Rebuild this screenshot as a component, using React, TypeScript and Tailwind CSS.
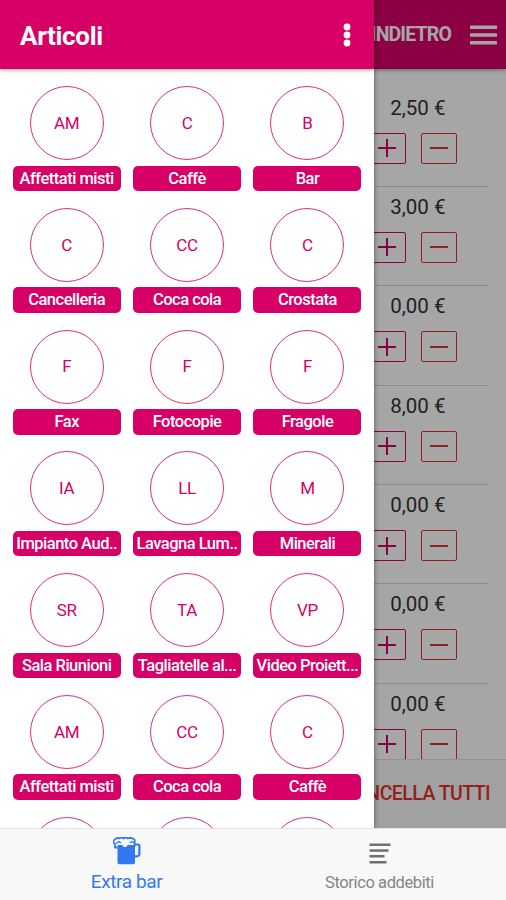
const articles = [
  { initials: 'AM', name: 'Affettati misti' },
  { initials: 'C', name: 'Caffè' },
  { initials: 'B', name: 'Bar' },
  { initials: 'C', name: 'Cancelleria' },
  { initials: 'CC', name: 'Coca cola' },
  { initials: 'C', name: 'Crostata' },
  { initials: 'F', name: 'Fax' },
  { initials: 'F', name: 'Fotocopie' },
  { initials: 'F', name: 'Fragole' },
  { initials: 'IA', name: 'Impianto Aud..' },
  { initials: 'LL', name: 'Lavagna Lum..' },
  { initials: 'M', name: 'Minerali' },
  { initials: 'SR', name: 'Sala Riunioni' },
  { initials: 'TA', name: 'Tagliatelle al...' },
  { initials: 'VP', name: 'Video Proiett...' },
  { initials: 'AM', name: 'Affettati misti' },
  { initials: 'CC', name: 'Coca cola' },
  { initials: 'C', name: 'Caffè' },
  { initials: '', name: '' },
  { initials: '', name: '' },
  { initials: '', name: '' },
]

const prices = ['2,50 €', '3,00 €', '0,00 €', '8,00 €', '0,00 €', '0,00 €', '0,00 €']

function BeerIcon() {
  return (
    <svg width="28" height="28" viewBox="0 0 28 28" fill="none">
      <path d="M4.5 10h17.5v15.4a1.8 1.8 0 0 1-1.8 1.8H6.3a1.8 1.8 0 0 1-1.8-1.8z" fill="#3478f0" />
      <path d="M21 7.5h4a1.4 1.4 0 0 1 1.4 1.4v8a2.4 2.4 0 0 1-2.4 2.4H21" stroke="#3478f0" strokeWidth="2.2" />
      <path
        d="M4.5 10.5H2V7.2A2.8 2.8 0 0 1 2.6 2a3 3 0 0 1 3.6-.6 4 4 0 0 1 4.4 0 4 4 0 0 1 4.4 0 4 4 0 0 1 4.2 0A2.6 2.6 0 0 1 21.6 5v5"
        stroke="#3478f0"
        strokeWidth="1.8"
      />
      <path d="M4.5 8v3h17V8z" fill="#3478f0" />
      <path d="M3 6.5l3-2 2 1.5M17 6l2-1.5 2.5 2" stroke="#3478f0" strokeWidth="1.3" />
      <path d="M9.5 8.5a2.6 2.2 0 0 0 5 0l-2.5-1.6z" fill="#f8f8f8" />
    </svg>
  )
}

function ListIcon() {
  return (
    <svg width="22" height="22" viewBox="0 0 22 22" fill="#707070">
      <rect x="0.5" y="0.5" width="21" height="2.5" />
      <rect x="0.5" y="6.3" width="19" height="2.5" />
      <rect x="0.5" y="12" width="15" height="2.5" />
      <rect x="0.5" y="18" width="17" height="2.5" />
    </svg>
  )
}

function Header() {
  return (
    <header className="z-10 flex h-[69px] shrink-0 items-center justify-end bg-[#d60066] pr-[9px] text-white shadow-[0_1px_4px_rgba(0,0,0,0.4)]">
      <span className="mr-[19px] pt-px text-[19.5px] font-bold tracking-[-0.85px]">INDIETRO</span>
      <svg width="27" height="20" viewBox="0 0 27 20" fill="currentColor">
        <rect width="27" height="3.6" y="0.5" rx="0.6" />
        <rect width="27" height="3.6" y="8.2" rx="0.6" />
        <rect width="27" height="3.6" y="15.9" rx="0.6" />
      </svg>
    </header>
  )
}

function PriceRow({ price }: { price: string }) {
  return (
    <div className="mx-[18px] h-[99.4px] border-b border-[#d8d8d8] pt-[8px]">
      <div className="flex justify-end pr-[42.5px] text-[20.5px] leading-[24px] text-[#333]">{price}</div>
      <div className="mt-[13px] flex justify-end gap-[15px] pr-[31px]">
        <button className="flex h-[31px] w-[36px] items-center justify-center rounded-[2px] border border-[#d60066] pr-[2px] text-[#d60066]">
          <svg width="18" height="18" viewBox="0 0 18 18" stroke="currentColor" strokeWidth="2">
            <path d="M0 9h18M9 0v18" />
          </svg>
        </button>
        <button className="flex h-[31px] w-[36px] items-center justify-center rounded-[2px] border border-[#e4302c] text-[#e4302c]">
          <svg width="18" height="18" viewBox="0 0 18 18" stroke="currentColor" strokeWidth="2">
            <path d="M0 9h18" />
          </svg>
        </button>
      </div>
    </div>
  )
}

function Drawer() {
  return (
    <aside className="absolute inset-y-0 left-0 z-30 flex w-[374px] flex-col overflow-hidden bg-white shadow-[0_0_5px_rgba(0,0,0,0.5)]">
      <div className="flex h-[69px] shrink-0 items-center justify-between bg-[#d60066] pl-[20px] pr-[23px] pt-[3px] text-white shadow-[0_1px_4px_rgba(0,0,0,0.4)]">
        <h1 className="text-[26px] font-bold tracking-[-0.3px]">Articoli</h1>
        <svg width="8" height="24" viewBox="0 0 8 24" fill="currentColor" className="mb-[2px]">
          <circle cx="4" cy="4" r="3.4" />
          <circle cx="4" cy="12" r="3.4" />
          <circle cx="4" cy="20" r="3.4" />
        </svg>
      </div>
      <div className="grid auto-rows-[121.75px] grid-cols-[repeat(3,120.4px)] pl-[6.5px] pt-[17px]">
        {articles.map(({ initials, name }, i) => (
          <div key={i} className="flex flex-col items-center">
            <div className="flex size-[74px] shrink-0 items-center justify-center rounded-full border border-[#d8337c] pt-px text-[17px] tracking-[-0.3px] text-[#d60066]">
              {initials}
            </div>
            <div className="mt-[5.5px] h-[25.5px] w-[108px] shrink-0 rounded-[5px] bg-[#d60066] text-center text-[16.5px] leading-[25.5px] font-medium tracking-[-0.5px] whitespace-nowrap text-white">
              {name}
            </div>
          </div>
        ))}
      </div>
    </aside>
  )
}

export default function App() {
  return (
    <div className="flex h-[900px] w-[506px] flex-col overflow-hidden bg-white font-['Roboto',sans-serif]">
      <main className="relative flex h-[828px] shrink-0 flex-col overflow-hidden">
        <Header />
        <div className="min-h-0 flex-1 overflow-hidden pt-[18.5px]">
          {prices.map((price, i) => (
            <PriceRow key={i} price={price} />
          ))}
        </div>
        <div className="flex h-[69px] shrink-0 items-center justify-end border-t border-[#e0e0e0] bg-[#f8f8f8] pr-[16px] text-[19.5px] font-medium tracking-[-0.55px] whitespace-nowrap text-[#e4302c]">
          CANCELLA TUTTI
        </div>
        <div className="absolute inset-0 z-20 bg-black/35" />
        <Drawer />
      </main>
      <nav className="grid h-[72px] grid-cols-2 border-t border-[#e4e4e4] bg-[#f8f8f8]">
        <div className="flex flex-col items-center pt-[8px] text-[#3478f0]">
          <BeerIcon />
          <span className="mt-[5px] text-[19px] leading-[24px] tracking-[-0.4px]">Extra bar</span>
        </div>
        <div className="flex flex-col items-center pt-[14px] text-[#858585]">
          <ListIcon />
          <span className="mt-[6px] text-[16.5px] leading-[24px] tracking-[-0.4px]">Storico addebiti</span>
        </div>
      </nav>
    </div>
  )
}
